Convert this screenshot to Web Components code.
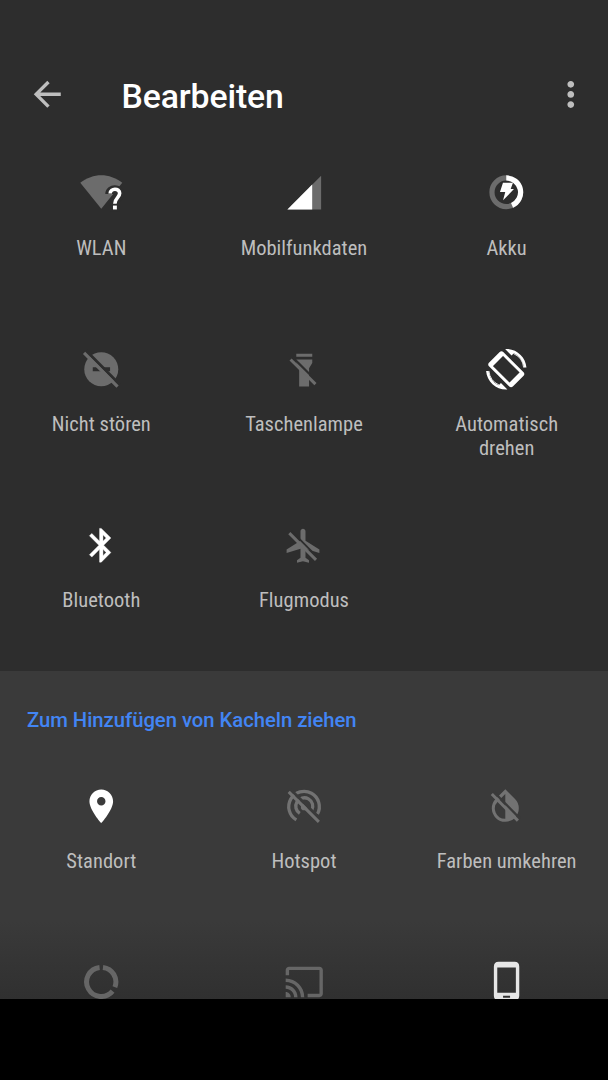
<!DOCTYPE html>
<html lang="de"><head><meta charset="utf-8"><title>Bearbeiten</title>
<style>html,body{margin:0;background:#000}body{width:608px;height:1080px;overflow:hidden;font-family:Roboto,"Liberation Sans",sans-serif}</style>
</head><body>
<qs-editor></qs-editor>
<script>
const slash=(a,b,c,d,w=3.2,g=3)=>`<path class="gap" d="M${a+2.1} ${b-2.1}L${c+2.1} ${d-2.1}" stroke-width="${g}"/><path class="ln" d="M${a} ${b}L${c} ${d}" stroke-width="${w}"/>`;
const M='0 0 24 24', C='-20.27 -20.27 40.54 40.54';
const ICONS={
 wifi:['-20.27 -20.77 40.54 40.54',`<path d="M-21-10C-8-20 8-20 21-10L0 16Z"/><path class="gap" stroke-width="9" stroke-linejoin="round" d="M8.5 1.2C8.5-4.5 18.5-4.5 18.5 1C18.5 5 13.3 5.5 13.3 10.5V15"/><path class="gap" stroke-width="6" d="M8 16H18"/><path stroke="#fff" fill="none" stroke-width="3.6" d="M8.9 .8C8.9-4.9 18.4-4.9 18.4 .6C18.4 4.8 13.6 5.1 13.6 11"/><path fill="#fff" d="M11.7 12.8h3.9v3.9h-3.9z"/>`],
 signal:['0 -.15 24 24',`<path d="M2 22h20V2z"/><path fill="#fff" d="M2 22h14.7V7.3z"/>`],
 battery:[C,`<circle r="14.3" fill="none" stroke="currentColor" stroke-width="5.2"/><path d="M0-14.3A14.3 14.3 0 0 1 5.8 13.1" fill="none" stroke="#fff" stroke-width="5.2"/><path fill="#fff" d="M-3.3-9.5H6.7L4.4-3.2H7.7L-3.2 8L-1-.2H-6.3Z"/>`],
 dnd:[C,`<circle r="17"/><path fill="var(--bg)" d="M-8.5-2H-2L2 2H-8.5zM2-2H8.8V2H6z"/>`+slash(-17.2,-16.3,16.3,17.3)],
 torch:[C,`<path d="M-8-15.6H8v3H-8zM-8-9.7H8v3.4L4.8-1V17.3H-5.1V-1L-8-6.3z"/>`+slash(-13.7,-9.8,11.2,14.8,3,2.2)],
 rotate:[M,`<path d="M16.48 2.52c3.27 1.55 5.61 4.72 5.97 8.48h1.5C23.44 4.84 18.29 0 12 0l-.66.03 3.81 3.81 1.33-1.32zm-6.25-.77c-.59-.59-1.54-.59-2.12 0L1.75 8.11c-.59.59-.59 1.54 0 2.12l12.02 12.02c.59.59 1.54.59 2.12 0l6.36-6.36c.59-.59.59-1.54 0-2.12L10.23 1.75zm4.6 19.44L2.81 9.17l6.36-6.36 12.02 12.02-6.36 6.36zm-7.31.29C4.25 19.94 1.91 16.76 1.55 13H.05C.56 19.16 5.71 24 12 24l.66-.03-3.81-3.81-1.33 1.32z"/><path fill="none" stroke="currentColor" stroke-width="2" d="M3 9.8L9.8 3M14.2 21L21 14.2"/><path fill="none" stroke="currentColor" stroke-width=".6" d="M2.8 9.2L14.8 21.2M9.2 2.8L21.2 14.8"/><path fill="none" stroke="currentColor" stroke-width=".5" d="M16.3 2.7A10.3 10.3 0 0 1 22.3 11M7.7 21.3A10.3 10.3 0 0 1 1.7 13"/>`],
 bluetooth:[M,`<path stroke="currentColor" stroke-width=".25" d="M17.71 7.71L12 2h-1v7.59L6.41 5 5 6.41 10.59 12 5 17.59 6.41 19 11 14.41V22h1l5.71-5.71-4.3-4.29 4.3-4.29zM13 5.83l1.88 1.88L13 9.59V5.83zm1.88 10.46L13 18.17v-3.76l1.88 1.88z"/>`],
 plane:['-19 -20.27 40.54 40.54',`<path d="M-2.5-13.7C-2.5-17.3 2.5-17.3 2.5-13.7V-4.5L16.4 4.3V7.7L2.5 3.4V12.4L6 15V17.6L0 16L-6 17.6V15L-2.5 12.4V3.4L-16.4 7.7V4.3L-2.5-4.5Z"/>`+slash(-13.7,-12.2,13,14.6,3,1.8)],
 pin:[M,`<path d="M12 2C8.13 2 5 5.13 5 9c0 5.25 7 13 7 13s7-7.75 7-13c0-3.87-3.13-7-7-7zm0 9.5c-1.38 0-2.5-1.12-2.5-2.5s1.12-2.5 2.5-2.5 2.5 1.12 2.5 2.5-1.12 2.5-2.5 2.5z"/>`],
 hotspot:[C,`<g fill="none" stroke="currentColor" stroke-width="3.3"><path d="M-7.9 13.6A15.3 15.3 0 1 1 13.2 7.7"/><path d="M-4.5 7.2A8.5 8.5 0 1 1 7.5 4"/></g><circle r="3.4" cy=".7"/>`+slash(-15.6,-14.4,14.6,15.6,3)],
 invert:['-19.3 -20.27 40.54 40.54',`<path d="M0-17L9.5-7.5A13.5 13.5 0 1 1-9.5-7.5ZM0-12.2L-7.2-5A10.2 10.2 0 0 0 0 12.6Z" fill-rule="evenodd"/>`+slash(-13.5,-12.2,12.6,14.4,3,2.4)],
 data:['-20.27 -19.9 40.54 40.54',`<path fill="none" stroke="currentColor" stroke-width="5" d="M1.7-14.5A14.6 14.6 0 0 1 13.6 5.3M11.3 9.2A14.6 14.6 0 1 1-1.7-14.5"/>`],
 cast:['0 .2 24 24',`<path d="M21 3H3c-1.1 0-2 .9-2 2v3h2V5h18v14h-7v2h7c1.1 0 2-.9 2-2V5c0-1.1-.9-2-2-2zM1 18v3h3c0-1.66-1.34-3-3-3zm0-4v2c2.76 0 5 2.24 5 5h2c0-3.87-3.13-7-7-7zm0-4v2c4.97 0 9 4.03 9 9h2c0-6.08-4.93-11-11-11z"/>`],
 phone:['-20.57 -20.27 40.54 40.54',`<path fill-rule="evenodd" d="M-8-20.4H8Q12.7-20.4 12.7-15.5V13.5Q12.7 18 8 18H-8Q-12.7 18-12.7 13.5V-15.5Q-12.7-20.4-8-20.4ZM-9.3-14.8V10.4H9.3V-14.8ZM-3.5 13.6V15.4H3.5V13.6Z"/>`],
 back:[M,`<path d="M20 11H7.83l5.59-5.59L12 4l-8 8 8 8 1.41-1.41L7.83 13H20v-2z"/>`],
 more:['-.3 -.1 24 24',`<path d="M12 8c1.1 0 2-.9 2-2s-.9-2-2-2-2 .9-2 2 .9 2 2 2zm0 2c-1.1 0-2 .9-2 2s.9 2 2 2 2-.9 2-2-.9-2-2-2zm0 6c-1.1 0-2 .9-2 2s.9 2 2 2 2-.9 2-2-.9-2-2-2z"/>`]
};
class QsIcon extends HTMLElement{
 connectedCallback(){
  const [vb,g]=ICONS[this.getAttribute('name')];
  this.attachShadow({mode:'open'}).innerHTML=`<style>:host{display:block;width:40.54px;height:40.54px;flex:none}svg{display:block;width:100%;height:100%;overflow:visible;fill:currentColor}.gap{fill:none;stroke:var(--bg)}.ln{fill:none;stroke:currentColor}</style><svg viewBox="${vb}">${g}</svg>`;
 }
}
customElements.define('qs-icon',QsIcon);
class QsTile extends HTMLElement{
 connectedCallback(){
  this.attachShadow({mode:'open'}).innerHTML=`<style>:host{display:flex;flex-direction:column;align-items:center;height:176.4px;color:var(--off)}:host([on]){color:#fff}
  .label{margin-top:23.9px;font-size:20.5px;line-height:23.6px;font-stretch:75%;letter-spacing:.03px;color:#bebebe;text-align:center;width:150px}</style>
  <qs-icon name="${this.getAttribute('icon')}"></qs-icon><div class="label"><slot></slot></div>`;
 }
}
customElements.define('qs-tile',QsTile);
class QsGrid extends HTMLElement{
 connectedCallback(){
  this.attachShadow({mode:'open'}).innerHTML=`<style>:host{display:grid;grid-template-columns:repeat(3,1fr)}</style><slot></slot>`;
 }
}
customElements.define('qs-grid',QsGrid);
class QsToolbar extends HTMLElement{
 connectedCallback(){
  this.attachShadow({mode:'open'}).innerHTML=`<style>:host{display:flex;box-sizing:border-box;height:121px;padding:68px 17px 0 27px;color:#bebebe;align-items:flex-start}
  qs-icon{margin-top:6px}h1{margin:9px 0 0 54px;flex:1;font-size:33.78px;line-height:40px;font-weight:500;letter-spacing:-.12px;color:#fff}</style>
  <qs-icon name="back"></qs-icon><h1><slot></slot></h1><qs-icon name="more"></qs-icon>`;
 }
}
customElements.define('qs-toolbar',QsToolbar);
class QsEditor extends HTMLElement{
 connectedCallback(){
  this.attachShadow({mode:'open'}).innerHTML=`<style>:host{display:flex;flex-direction:column;width:608px;height:999px;overflow:hidden}
  .active{--bg:#2d2d2d;--off:#6c6c6c;background:#2d2d2d;height:671px;flex:none}.active qs-grid{padding-top:51.2px}
  .more{--bg:#3a3a3a;--off:#727272;background:linear-gradient(#3a3a3a 0 250px,#303030 328px);flex:1;min-height:0;overflow:hidden}
  h2{margin:0;padding:36px 27px 0;font-size:20.27px;line-height:26px;font-weight:500;letter-spacing:-.03px;color:#4285f4}
  .more qs-grid{padding-top:52.6px}.soft{color:#e6e6e6}</style>
  <section class="active"><qs-toolbar>Bearbeiten</qs-toolbar><qs-grid>
  <qs-tile icon="wifi">WLAN</qs-tile><qs-tile icon="signal">Mobilfunkdaten</qs-tile><qs-tile icon="battery">Akku</qs-tile>
  <qs-tile icon="dnd">Nicht stören</qs-tile><qs-tile icon="torch">Taschenlampe</qs-tile><qs-tile icon="rotate" on>Automatisch drehen</qs-tile>
  <qs-tile icon="bluetooth" on>Bluetooth</qs-tile><qs-tile icon="plane">Flugmodus</qs-tile></qs-grid></section>
  <section class="more"><h2>Zum Hinzufügen von Kacheln ziehen</h2><qs-grid>
  <qs-tile icon="pin" on>Standort</qs-tile><qs-tile icon="hotspot">Hotspot</qs-tile><qs-tile icon="invert">Farben umkehren</qs-tile>
  <qs-tile icon="data" style="color:#666"></qs-tile><qs-tile icon="cast" style="color:#666"></qs-tile><qs-tile icon="phone" class="soft"></qs-tile></qs-grid></section>`;
 }
}
customElements.define('qs-editor',QsEditor);
</script></body></html>
